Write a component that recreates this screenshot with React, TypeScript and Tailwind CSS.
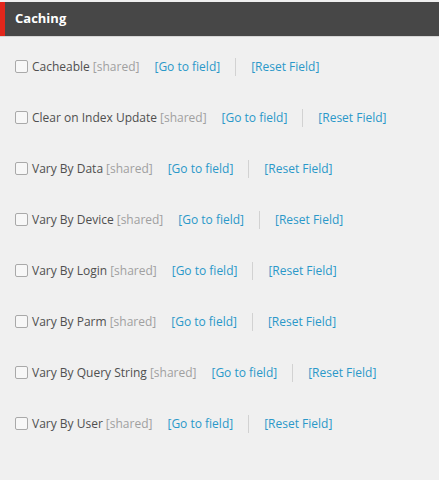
const fields = [
  "Cacheable",
  "Clear on Index Update",
  "Vary By Data",
  "Vary By Device",
  "Vary By Login",
  "Vary By Parm",
  "Vary By Query String",
  "Vary By User",
];

export default function App() {
  return (
    <div className="min-h-[480px] w-[439px] bg-[#f0f0f0] pt-[2px] font-['Open_Sans',sans-serif]">
      {/* Section header */}
      <div className="flex h-[35px] items-center border-b border-[#d6d6d6] bg-[#474747]">
        <div className="h-full w-[5px] bg-[#e2261b]" />
        <span className="pl-[10px] text-[13px] font-bold text-white">Caching</span>
      </div>

      <div className="pt-[4px]">
        {fields.map((f) => (
          <div key={f} className="flex h-[51px] items-center pl-[15px] text-[12px]">
            <span className="h-[13px] w-[13px] rounded-[2px] border border-[#a9a9a9] bg-[#f7f7f7]" />
            <span className="ml-[4px] text-[#4f4f4f]">{f}</span>
            <span className="ml-[3px] text-[#a0a0a0]">[shared]</span>
            <a className="ml-[15px] cursor-pointer text-[#2a98c9]">[Go to field]</a>
            <span className="mx-[15px] h-[18px] w-px bg-[#d2d2d2]" />
            <a className="cursor-pointer text-[#2a98c9]">[Reset Field]</a>
          </div>
        ))}
      </div>
    </div>
  );
}
